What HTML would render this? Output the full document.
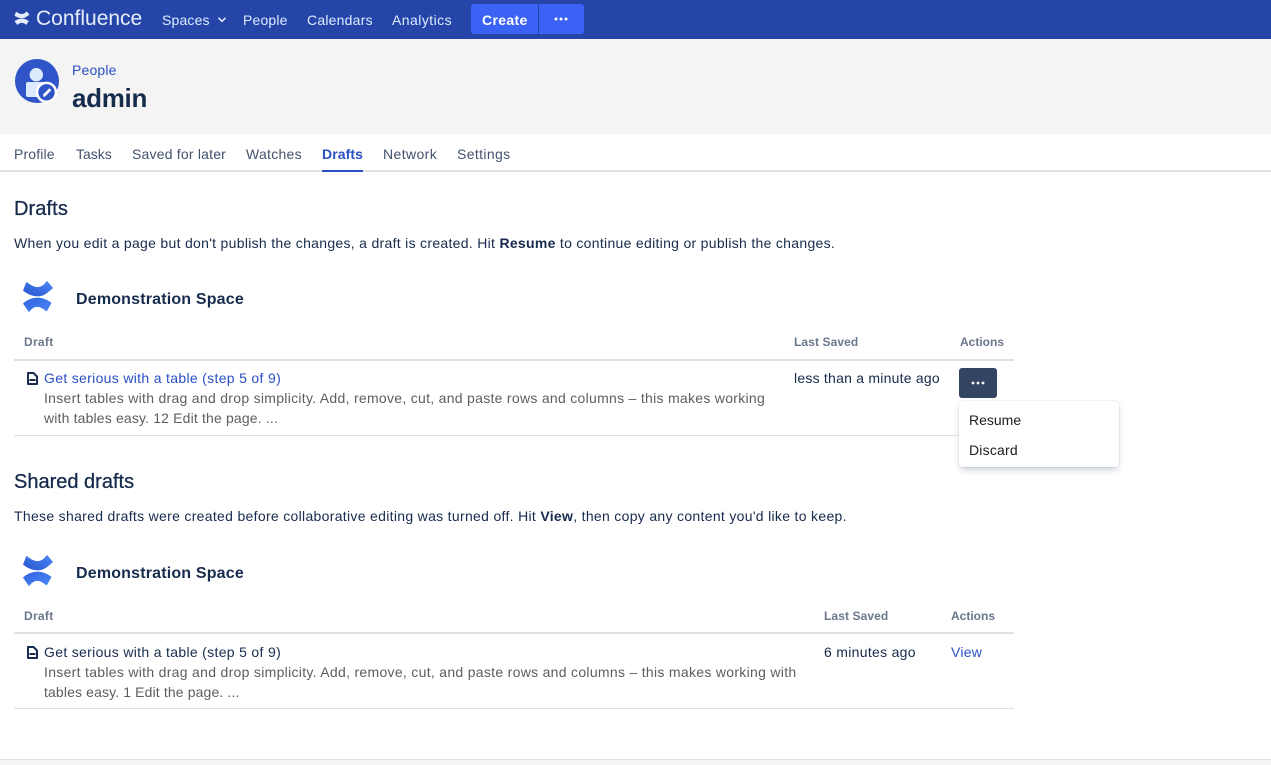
<!DOCTYPE html>
<html><head><meta charset="utf-8"><title>Drafts</title>
<style>
html,body{margin:0;padding:0;background:#fff}
body{width:1271px;height:765px;overflow:hidden;position:relative;font-family:"Liberation Sans",sans-serif;color:#172b4d;font-size:14px}
.t{position:absolute;white-space:nowrap;line-height:20px}
.b{position:absolute}
.nav{color:#deebff;font-size:14px}
.tab{color:#42526e;top:144px}
.th{color:#6b778c;font-size:12px;font-weight:bold;line-height:16px}
.ex{color:#5e5e5e}
.h{font-size:20px;line-height:24px;-webkit-text-stroke:.3px #172b4d}
a{color:#2a50c4;text-decoration:none}
svg{position:absolute;display:block}
</style></head><body>
<svg width="0" height="0" style="left:0;top:0"><defs>
<linearGradient id="g" x1="0" y1="1" x2="1" y2="0"><stop offset="0" stop-color="#2a56d0"/><stop offset="1" stop-color="#4a86f5"/></linearGradient>
<linearGradient id="g2" x1="0" y1="0" x2="1" y2="1"><stop offset="0" stop-color="#2f63e0"/><stop offset="1" stop-color="#4a86f5"/></linearGradient>
</defs></svg>
<div class="b" style="left:0;top:0;width:1271px;height:39px;background:#2546a8"></div>
<svg style="left:14px;top:11px" width="16" height="14" viewBox="22 280 32 32" preserveAspectRatio="none"><path fill="#e6edfa" stroke="#e6edfa" stroke-linejoin="round" d="M26.500 282.500C30 285 33.500 287.500 38 287.500C41.500 287.500 44.500 285 47 281.500L52.500 288C48 292 43.500 296 38 296C33 296 27.500 293.500 23.500 290.500ZM23.500 303.500C27 300.500 32 298 37.500 298C43 298 47 300 51 303L46.500 311C43 308 40.500 306.500 37.500 306.500C34.500 306.500 31.500 308 29 311.500Z"/></svg>
<div class="t" style="left:36px;top:7px;font-size:21px;line-height:24px;color:#e6edfa">Confluence</div>
<div class="t nav" style="left:162px;top:10px;letter-spacing:.17px">Spaces</div>
<svg style="left:217px;top:16px" width="10" height="8" viewBox="0 0 10 8"><path d="M1.500 1.800 5 5.300l3.500-3.500" fill="none" stroke="#deebff" stroke-width="1.600"/></svg>
<div class="t nav" style="left:243px;top:10px;letter-spacing:.17px">People</div>
<div class="t nav" style="left:307px;top:10px;letter-spacing:.22px">Calendars</div>
<div class="t nav" style="left:392px;top:10px;letter-spacing:.45px">Analytics</div>
<div class="b" style="left:471px;top:4px;width:67px;height:30px;background:#3a62f5;border-radius:3px 0 0 3px"></div>
<div class="b" style="left:539px;top:4px;width:45px;height:30px;background:#3a62f5;border-radius:0 3px 3px 0"></div>
<div class="t" style="left:482px;top:10px;color:#fff;font-weight:bold;letter-spacing:.33px">Create</div>
<svg style="left:554px;top:16px" width="14" height="6"><circle cx="2" cy="3" r="1.500" fill="#fff"/><circle cx="7" cy="3" r="1.500" fill="#fff"/><circle cx="12" cy="3" r="1.500" fill="#fff"/></svg>

<div class="b" style="left:0;top:39px;width:1271px;height:95px;background:#f4f4f4"></div>
<svg style="left:15px;top:59px" width="44" height="46" viewBox="0 0 44 46">
<circle cx="22" cy="22" r="22" fill="#2f55c8"/>
<circle cx="21.300" cy="15.700" r="6.700" fill="#deebff"/>
<path d="M11 25c0-1.200.8-2 2-2h17c1.200 0 2 .8 2 2v13H13c-1.200 0-2-.8-2-2z" fill="#deebff"/>
<circle cx="31.500" cy="33.300" r="10.700" fill="#fff"/>
<circle cx="31.500" cy="33.300" r="8.200" fill="#2f55c8"/>
<path d="M28.300 36.500l1-.2 6-6" fill="none" stroke="#fff" stroke-width="2.800"/>
</svg>
<div class="t" style="left:72px;top:60px;letter-spacing:.17px"><a href="#">People</a></div>
<div class="t" style="left:72px;top:83px;font-size:26px;line-height:30px;font-weight:bold;letter-spacing:-.3px">admin</div>

<div class="b" style="left:0;top:170px;width:1271px;height:2px;background:#dfe1e6"></div>
<div class="t tab" style="left:14px;letter-spacing:.14px">Profile</div>
<div class="t tab" style="left:76px">Tasks</div>
<div class="t tab" style="left:132px;letter-spacing:.2px">Saved for later</div>
<div class="t tab" style="left:246px;letter-spacing:.28px">Watches</div>
<div class="t tab" style="left:322px;color:#2a50c4;font-weight:bold;letter-spacing:.1px">Drafts</div>
<div class="b" style="left:322px;top:170px;width:41px;height:2px;background:#2a50c4"></div>
<div class="t tab" style="left:383px;letter-spacing:.4px">Network</div>
<div class="t tab" style="left:457px;letter-spacing:.37px">Settings</div>

<div class="t h" style="left:14px;top:197px;letter-spacing:.1px">Drafts</div>
<div class="t" style="left:14px;top:233px;letter-spacing:.3px">When you edit a page but don't publish the changes, a draft is created. Hit <b>Resume</b> to continue editing or publish the changes.</div>
<svg style="left:20px;top:278px" width="36" height="36" viewBox="20 278 36 36"><path fill="url(#g)" stroke="url(#g)" stroke-width=".8" stroke-linejoin="round" d="M26.500 282.500C30 285 33.500 287.500 38 287.500C41.500 287.500 44.500 285 47 281.500L52.500 288C48 292 43.500 296 38 296C33 296 27.500 293.500 23.500 290.500Z"/><path fill="url(#g2)" stroke="url(#g2)" stroke-width=".8" stroke-linejoin="round" d="M23.500 303.500C27 300.500 32 298 37.500 298C43 298 47 300 51 303L46.500 311C43 308 40.500 306.500 37.500 306.500C34.500 306.500 31.500 308 29 311.500Z"/></svg>
<div class="t" style="left:76px;top:292px;font-size:16px;line-height:16px;font-weight:bold;letter-spacing:.18px">Demonstration Space</div>
<div class="t th" style="left:24px;top:334px;letter-spacing:.3px">Draft</div>
<div class="t th" style="left:794px;top:334px;letter-spacing:.1px">Last Saved</div>
<div class="t th" style="left:960px;top:334px">Actions</div>
<div class="b" style="left:14px;top:359px;width:1000px;height:2px;background:#dfe1e6"></div>
<svg style="left:25.600px;top:371px" width="12" height="15" viewBox="0 0 12 15"><path d="M2 2h5.500L11 5.500V13H2zM3.500 9h6" fill="none" stroke="#172b4d" stroke-width="2" stroke-linejoin="round"/></svg>
<div class="t" style="left:44px;top:368px;letter-spacing:.32px"><a href="#">Get serious with a table (step 5 of 9)</a></div>
<div class="t ex" style="left:44px;top:388px;letter-spacing:.29px">Insert tables with drag and drop simplicity. Add, remove, cut, and paste rows and columns – this makes working</div>
<div class="t ex" style="left:44px;top:408px;letter-spacing:.16px">with tables easy. 12 Edit the page. ...</div>
<div class="t" style="left:794px;top:368px;letter-spacing:.23px">less than a minute ago</div>
<div class="b" style="left:959px;top:368px;width:38px;height:30px;background:#344563;border-radius:3px"></div>
<svg style="left:971px;top:380px" width="14" height="6"><circle cx="2" cy="3" r="1.400" fill="#fff"/><circle cx="7" cy="3" r="1.400" fill="#fff"/><circle cx="12" cy="3" r="1.400" fill="#fff"/></svg>
<div class="b" style="left:14px;top:435px;width:1000px;height:1px;background:#dfe1e6"></div>
<div class="b" style="left:959px;top:401px;width:160px;height:66px;background:#fff;border-radius:3px;box-shadow:0 4px 8px -2px rgba(9,30,66,.25),0 0 1px rgba(9,30,66,.31)"></div>
<div class="t" style="left:969px;top:410px;color:#1c1c1c">Resume</div>
<div class="t" style="left:969px;top:440px;color:#1c1c1c;letter-spacing:.2px">Discard</div>

<div class="t h" style="left:14px;top:470px">Shared drafts</div>
<div class="t" style="left:14px;top:506px;letter-spacing:.31px">These shared drafts were created before collaborative editing was turned off. Hit <b>View</b>, then copy any content you'd like to keep.</div>
<svg style="left:20px;top:552px" width="36" height="36" viewBox="20 278 36 36"><path fill="url(#g)" stroke="url(#g)" stroke-width=".8" stroke-linejoin="round" d="M26.500 282.500C30 285 33.500 287.500 38 287.500C41.500 287.500 44.500 285 47 281.500L52.500 288C48 292 43.500 296 38 296C33 296 27.500 293.500 23.500 290.500Z"/><path fill="url(#g2)" stroke="url(#g2)" stroke-width=".8" stroke-linejoin="round" d="M23.500 303.500C27 300.500 32 298 37.500 298C43 298 47 300 51 303L46.500 311C43 308 40.500 306.500 37.500 306.500C34.500 306.500 31.500 308 29 311.500Z"/></svg>
<div class="t" style="left:76px;top:566px;font-size:16px;line-height:16px;font-weight:bold;letter-spacing:.18px">Demonstration Space</div>
<div class="t th" style="left:24px;top:608px;letter-spacing:.3px">Draft</div>
<div class="t th" style="left:824px;top:608px;letter-spacing:.1px">Last Saved</div>
<div class="t th" style="left:951px;top:608px">Actions</div>
<div class="b" style="left:14px;top:632px;width:1000px;height:2px;background:#dfe1e6"></div>
<svg style="left:25.600px;top:645px" width="12" height="15" viewBox="0 0 12 15"><path d="M2 2h5.500L11 5.500V13H2zM3.500 9h6" fill="none" stroke="#172b4d" stroke-width="2" stroke-linejoin="round"/></svg>
<div class="t" style="left:44px;top:642px;letter-spacing:.32px">Get serious with a table (step 5 of 9)</div>
<div class="t ex" style="left:44px;top:662px;letter-spacing:.3px">Insert tables with drag and drop simplicity. Add, remove, cut, and paste rows and columns – this makes working with</div>
<div class="t ex" style="left:44px;top:682px;letter-spacing:.13px">tables easy. 1 Edit the page. ...</div>
<div class="t" style="left:824px;top:642px;letter-spacing:.3px">6 minutes ago</div>
<div class="t" style="left:951px;top:642px;letter-spacing:.25px"><a href="#">View</a></div>
<div class="b" style="left:14px;top:708px;width:1000px;height:1px;background:#dfe1e6"></div>
<div class="b" style="left:0;top:759px;width:1271px;height:6px;background:#f4f5f7;border-top:1px solid #dfe1e6;box-sizing:border-box"></div>
</body></html>
